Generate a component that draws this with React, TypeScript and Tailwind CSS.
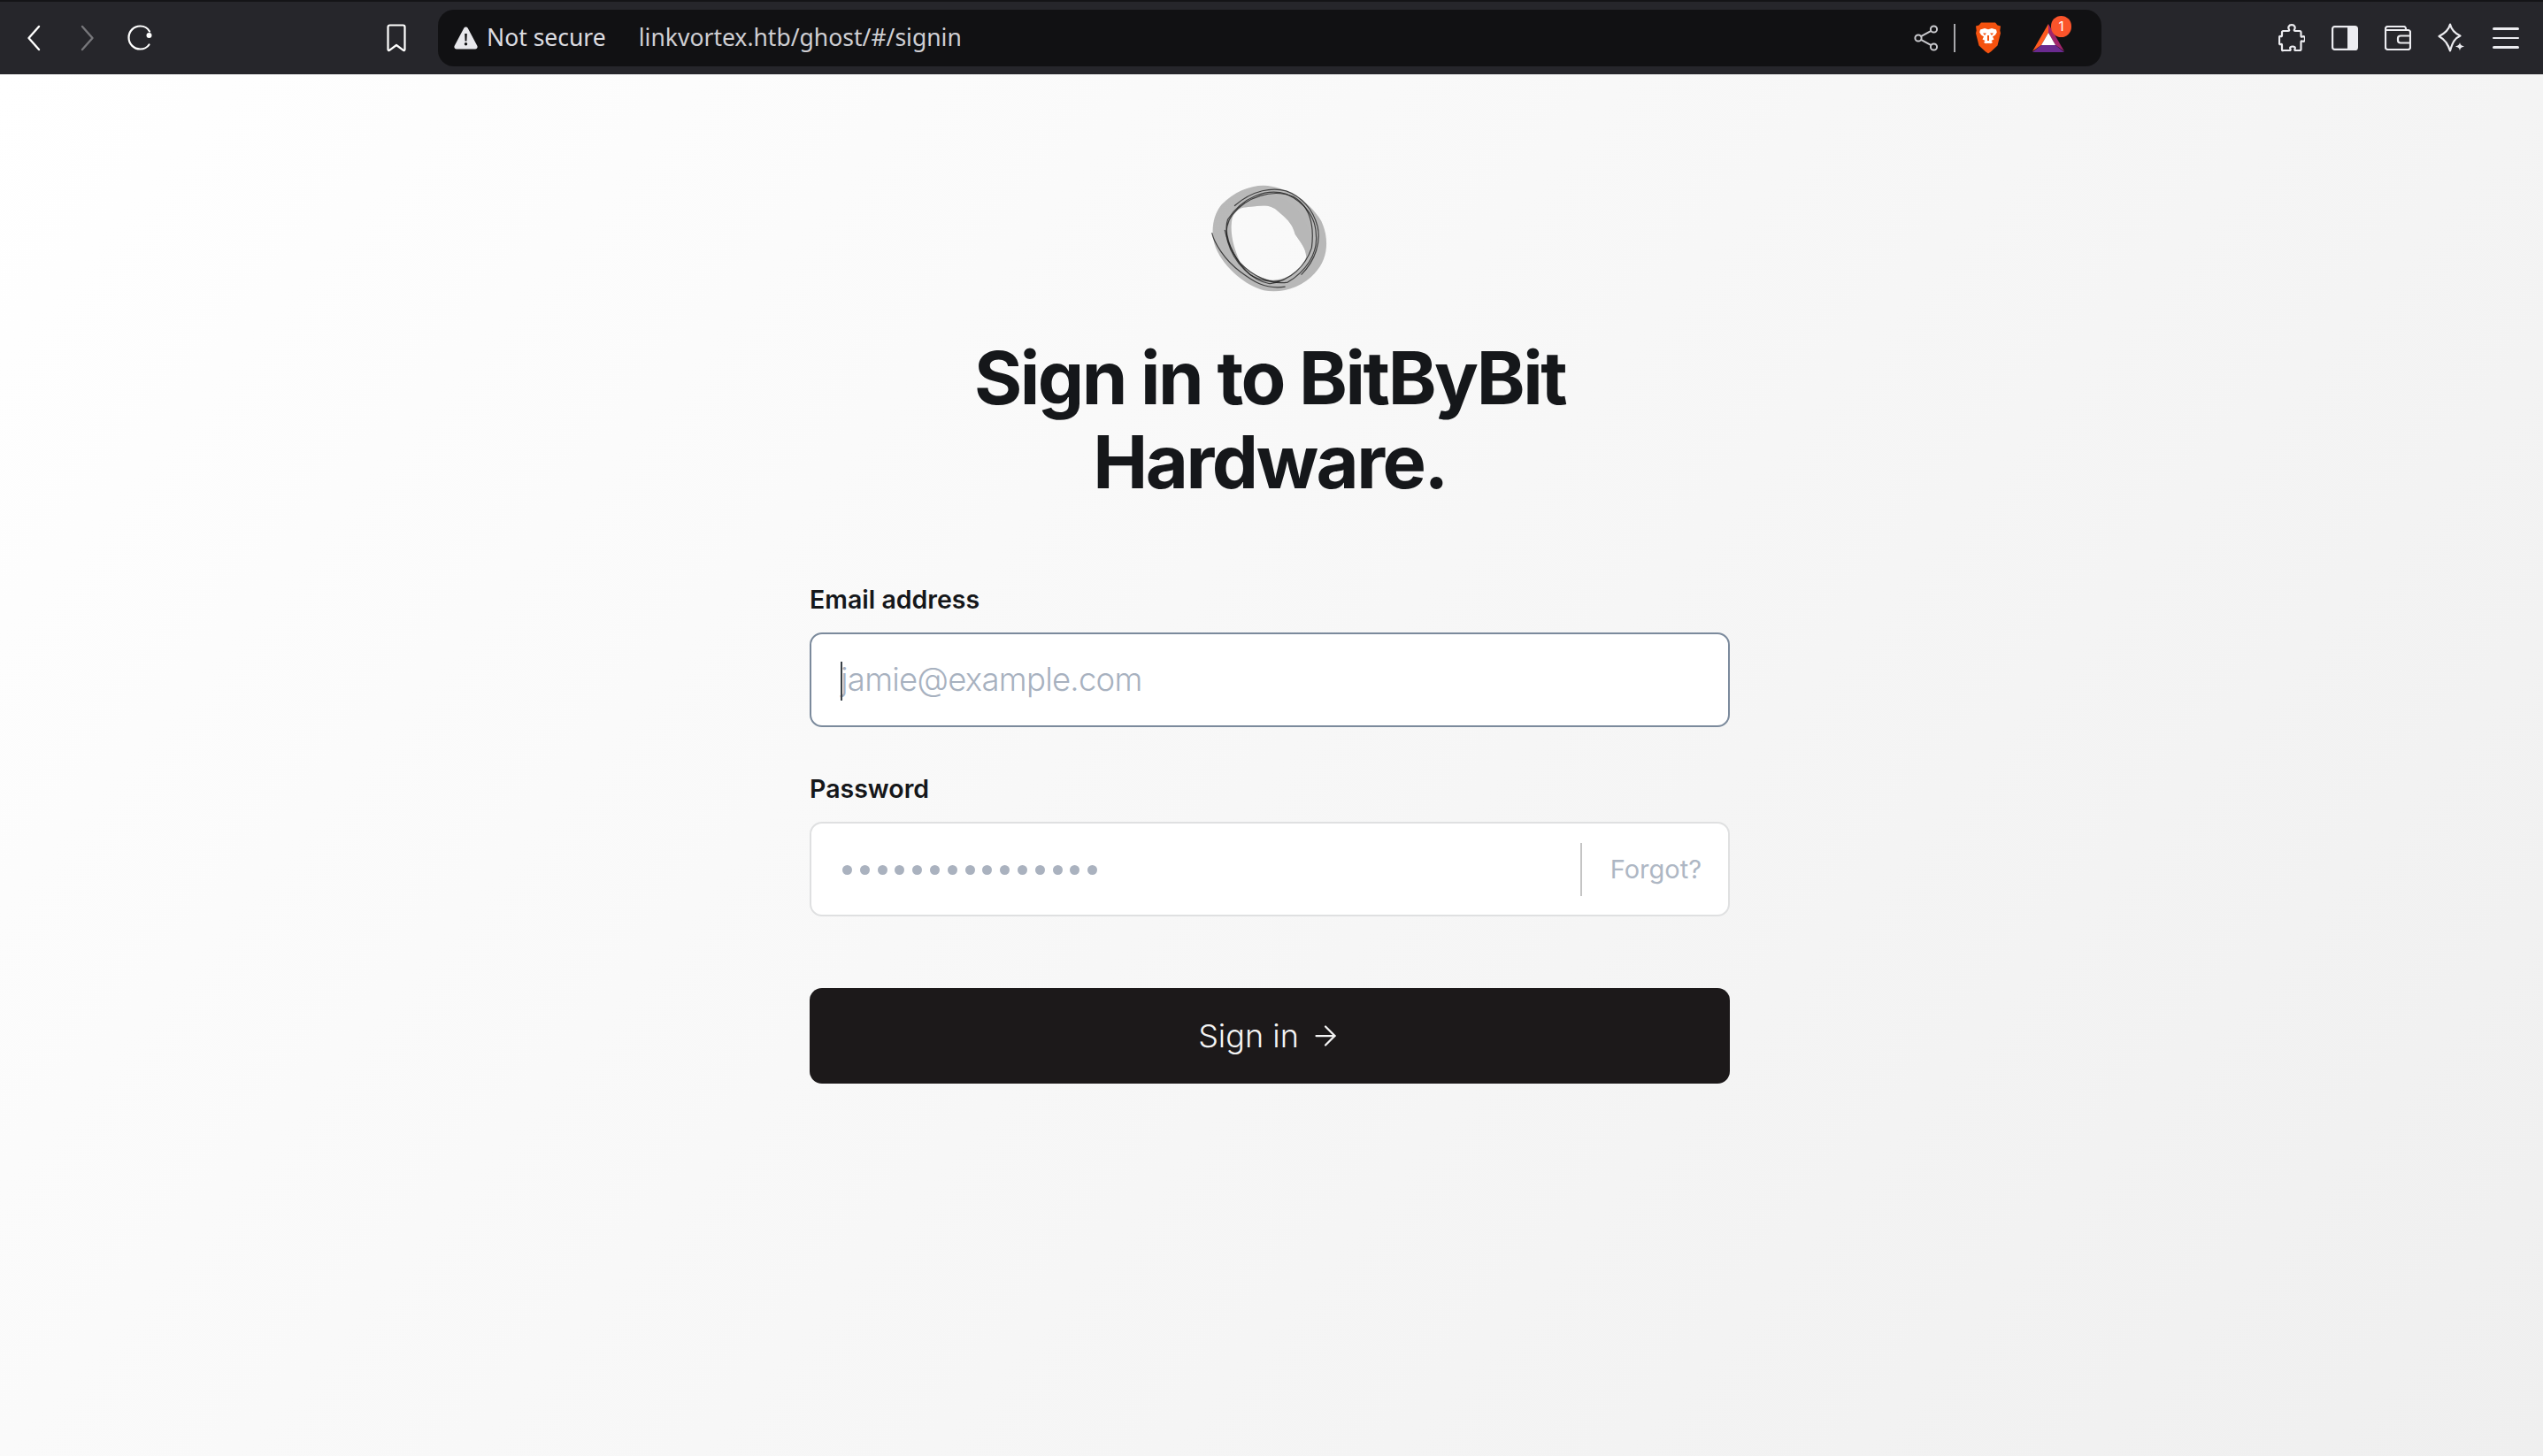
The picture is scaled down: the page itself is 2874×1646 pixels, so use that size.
import {ArrowRight} from "lucide-react";

const Back = () => (
    <svg width="24" height="32" viewBox="0 0 24 32" fill="none" stroke="currentColor" strokeWidth="2.4" strokeLinecap="round" strokeLinejoin="round">
        <path d="M15 3 3.500 16 15 29"/>
    </svg>
);

const Forward = () => (
    <svg width="24" height="32" viewBox="0 0 24 32" fill="none" stroke="currentColor" strokeWidth="2.4" strokeLinecap="round" strokeLinejoin="round">
        <path d="M4 3 15.500 16 4 29"/>
    </svg>
);

const Reload = () => (
    <svg width="32" height="32" viewBox="0 0 32 32" fill="none" stroke="currentColor" strokeWidth="2.2" strokeLinecap="round">
        <path d="M26 8.500C23.800 4.500 20 2.500 15.500 2.500 8 2.500 2.500 8.500 2.500 15.500s5.500 13 13 13c4.500 0 8-2 10-5"/>
        <circle cx="25.500" cy="13" r="3" fill="currentColor" stroke="none"/>
    </svg>
);

const Bookmark = () => (
    <svg width="24" height="32" viewBox="0 0 24 32" fill="none" stroke="currentColor" strokeWidth="2.2" strokeLinejoin="round" strokeLinecap="round">
        <path d="M3.500 1.500h15a2 2 0 0 1 2 2V29a1 1 0 0 1-1.600.8L11 24l-7.900 5.800A1 1 0 0 1 1.500 29V3.500a2 2 0 0 1 2-2Z"/>
    </svg>
);

const Warning = () => (
    <svg width="27" height="26" viewBox="0 0 27 26" className="shrink-0">
        <path fill="#e8e8ec" fillRule="evenodd" d="M11.300 1.800a2.500 2.500 0 0 1 4.400 0l10.600 20c.9 1.700-.3 3.700-2.200 3.700H2.900c-1.900 0-3.100-2-2.200-3.700ZM12.200 8l.4 8.500h1.800l.4-8.500ZM13.500 18a1.700 1.700 0 1 0 0 3.400 1.700 1.700 0 0 0 0-3.400Z"/>
    </svg>
);

const Share = () => (
    <svg width="28" height="30" viewBox="0 0 28 30" fill="none" stroke="#c9c9cd" strokeWidth="2">
        <circle cx="5" cy="15" r="3.600"/>
        <circle cx="22.500" cy="5" r="3.600"/>
        <circle cx="22.500" cy="25" r="3.600"/>
        <path d="M8 13.200 19.500 6.800M8 16.800 19.500 23.200"/>
    </svg>
);

const BraveLion = () => (
    <svg width="30" height="36" viewBox="0 0 30 36">
        <path fill="#f4520f" d="M7 .5h16l2.500 3 3.500 1-.7 5 .7 3-3.500 14-7 6.500-3.500 2.500-3.500-2.500-7-6.500L1 12.500l.7-3L1 4.500l3.500-1Z"/>
        <path fill="#fff" d="M6 8.500 11 7l4 1.300L19 7l5 1.500.8 3-1.800 3-3 2 1.500 3-3 1.500 1.500 2-5 3-5-3 1.500-2-3-1.500 1.500-3-3-2-1.800-3Z"/>
        <path fill="#f4520f" d="M9 12.500h4l-2 2.500ZM17 12.500h4l-2 2.500ZM14 15h2v6h-2ZM11.500 24h7L15 26.500Z"/>
    </svg>
);

const BatTriangle = () => (
    <svg width="36" height="32" viewBox="0 0 36 32">
        <path fill="#ff5a1f" d="M18 0 0 31l10-7 8-14Z"/>
        <path fill="#a1246b" d="M18 0v10l8 14 10 7Z"/>
        <path fill="#6a2a8f" d="M0 32h36l-10-8H10Z"/>
        <path fill="#fff" d="M18 10 10 24h16Z"/>
    </svg>
);

const Puzzle = () => (
    <svg width="30" height="32" viewBox="0 0 30 32" fill="none" stroke="#ececf0" strokeWidth="2.2" strokeLinejoin="round">
        <path d="M12 6.500C10.500 4 11.500 1.200 15 1.200s4.500 2.800 3 5.300c-.5 1 0 1.500 1 1.500h5c1 0 1.500.5 1.500 1.500v4c0 1 .6 1.500 1.500 1 2-1 3 .5 3 2.500s-1 3.500-3 2.500c-.9-.5-1.500 0-1.500 1v8c0 1-.5 1.500-1.500 1.500h-4.500c-1 0-1.500-.6-1-1.500 1-2-.5-3-2.500-3s-3.500 1-2.500 3c.5.9 0 1.500-1 1.500H5.500C4.500 30.500 4 30 4 29v-5c0-1-.6-1.500-1.500-1-1 .5-1.500-.2-1.500-1.200v-6.600c0-1 .5-1.700 1.500-1.200.9.500 1.500 0 1.500-1V9.500C4 8.500 4.500 8 5.500 8H11c1 0 1.500-.5 1-1.500Z"/>
    </svg>
);

const Sidebar = () => (
    <svg width="30" height="28" viewBox="0 0 30 28">
        <rect x="1.100" y="1.100" width="27.800" height="25.800" rx="2.500" fill="none" stroke="#ececf0" strokeWidth="2.2"/>
        <path fill="#ececf0" d="M18 1h8.500A2.500 2.500 0 0 1 29 3.500v21a2.500 2.500 0 0 1-2.500 2.500H18Z"/>
    </svg>
);

const Wallet = () => (
    <svg width="30" height="28" viewBox="0 0 30 28" fill="none" stroke="#ececf0" strokeWidth="2.2" strokeLinejoin="round">
        <path d="M24 5V3.500A2.500 2.500 0 0 0 21.500 1H3.500A2.500 2.500 0 0 0 1 3.500v21A2.500 2.500 0 0 0 3.500 27h23a2.500 2.500 0 0 0 2.500-2.500v-17A2.500 2.500 0 0 0 26.500 5H2"/>
        <path d="M29 11.500H18a3 3 0 0 0-3 3v2a3 3 0 0 0 3 3h11"/>
    </svg>
);

const Leo = () => (
    <svg width="32" height="34" viewBox="0 0 32 34">
        <path fill="none" stroke="#ececf0" strokeWidth="2.2" strokeLinejoin="round" d="M14 1.500c1.500 6 5 10 11.500 13-5.500 2.500-8.500 6-11.500 17-1-3-2-6-4.500-9.500C7.500 19 5 17 1.500 15 7.500 12 12.500 8 14 1.500Z"/>
        <path fill="#ececf0" d="M25 22c.5 2.500 1.500 3.500 5 4.500-3.500 1-4.500 2-5 5-.5-3-1.500-4-5-5 3.500-1 4.500-2 5-4.500Z"/>
    </svg>
);

const Menu = () => (
    <div className="flex flex-col gap-[8px] w-[30px]">
        <div className="h-[2.5px] bg-[#ececf0] rounded-full"/>
        <div className="h-[2.5px] bg-[#ececf0] rounded-full"/>
        <div className="h-[2.5px] bg-[#ececf0] rounded-full"/>
    </div>
);

// coordinates follow the 3x crop of the logo, hence the odd viewBox
const GhostLogo = () => (
    <svg width="132" height="124" viewBox="95 60 390 366" fill="none">
        <path fill="#777777" fillOpacity="0.5" fillRule="evenodd"
              d="M270 62C340 65 420 110 462 180c28 60 23 130-22 175-40 45-110 70-170 57C210 395 140 340 110 270 90 220 100 160 130 125 170 85 220 62 270 62ZM205 135C260 130 290 120 320 150c30 25 45 40 55 75 20 30 35 45 37 75-12 40-52 75-112 78-50-3-85-33-110-63-20-45-35-95-25-145 10-25 25-32 40-35Z"/>
        <path fill="#b5b5b5" fillOpacity="0.6" d="M205 135C260 130 290 120 320 150c30 25 45 40 55 75 20 30 35 45 37 75 8-30 20-70 0-110-25-50-60-85-110-90-40-5-80 5-97 35Z"/>
        <g stroke="#1f1f1f" strokeWidth="3.5" strokeOpacity="0.8">
            <path d="M150 175C200 100 280 70 345 90c65 30 100 80 100 140 5 60-35 120-95 155-60 10-120-25-160-65-30-40-55-100-40-145Z"/>
            <path d="M165 160C210 100 300 70 370 100c50 30 70 90 60 170-20 60-70 110-140 120-60-10-120-70-140-140-10-40 0-70 15-90Z"/>
            <path d="M172 130C235 75 300 68 345 80c50 18 90 60 105 120 10 50-5 110-55 160"/>
            <path d="M97 220c6 30 40 90 95 130 40 30 80 60 150 50"/>
            <path d="M140 210c10 50 40 110 85 150 30 20 70 25 100 20"/>
        </g>
    </svg>
);

const Dots = () => (
    <div className="flex gap-[8.8px] mt-[2px]">
        {Array.from({length: 15}).map((_, i) => (
            <div key={i} className="w-[11px] h-[11px] rounded-full bg-[#aab2bf]"/>
        ))}
    </div>
);

export default function App() {
    return (
        <div className="w-[2874px] h-[1646px] flex flex-col overflow-hidden font-['Inter',sans-serif]">
            <header className="h-[84px] shrink-0 bg-[#26262b] border-t-[2px] border-[#141417] flex items-center">
                <div className="flex items-center text-white ml-[29px] w-[150px]">
                    <Back/>
                    <span className="ml-[36px] text-[#77777b]"><Forward/></span>
                    <span className="ml-[30px]"><Reload/></span>
                </div>
                <span className="text-white ml-[258px]"><Bookmark/></span>
                <div className="ml-[34px] w-[1880px] h-[64px] rounded-[18px] bg-[#111113] flex items-center pl-[18px] pr-[26px] font-['Noto_Sans',sans-serif] text-[26.5px]">
                    <Warning/>
                    <span className="ml-[10px] text-[#dcdce0]">Not secure</span>
                    <span className="ml-[37px] text-[#cfcfd3] flex-1">linkvortex.htb/ghost/#/signin</span>
                    <Share/>
                    <div className="w-[2px] h-[32px] bg-[#a8a8ac] ml-[17px] mr-[22px]"/>
                    <BraveLion/>
                    <div className="ml-[35px] mr-[16px] relative">
                        <BatTriangle/>
                        <div className="absolute -top-[9px] left-[21px] w-[23px] h-[24px] rounded-full bg-[#fb542b] text-white text-[15px] leading-[24px] text-center font-['Inter']">1</div>
                    </div>
                </div>
                <div className="flex items-center gap-[30px] ml-[200px]">
                    <Puzzle/>
                    <Sidebar/>
                    <Wallet/>
                    <Leo/>
                    <Menu/>
                </div>
            </header>

            <main className="flex-1 bg-linear-[130deg] from-[#ffffff] to-[#efefef] flex flex-col items-center pr-[4px]">
                <div className="mt-[125px]"><GhostLogo/></div>
                <h1 className="mt-[47px] w-[760px] text-center text-[83px] leading-[95px] font-bold tracking-[-0.03em] text-[#15171a]">
                    Sign in to BitByBit Hardware.
                </h1>
                <form className="w-[1040px] mt-[90px] flex flex-col">
                    <label className="text-[28.5px] leading-[36px] font-semibold text-[#15171a]">Email address</label>
                    <div className="mt-[19px] h-[107px] rounded-[14px] bg-white border-[2px] border-[#7b8a9c] flex items-center pl-[33px] relative">
                        <div className="absolute left-[33px] top-[31px] w-[2px] h-[44px] bg-[#394047]"/>
                        <span className="text-[36.5px] text-[#a7b1bf] font-light tracking-[-0.02em]">jamie@example.com</span>
                    </div>
                    <label className="mt-[52px] text-[28.5px] leading-[36px] font-semibold text-[#15171a]">Password</label>
                    <div className="mt-[19px] h-[107px] rounded-[14px] bg-white border-[2px] border-[#dfe0e1] flex items-center pl-[35px] pr-[30px]">
                        <Dots/>
                        <div className="ml-auto w-[2px] h-[60px] bg-[#c4c4c4]"/>
                        <span className="ml-[32px] text-[29px] text-[#aeb7c4]">Forgot?</span>
                    </div>
                    <button type="button" className="mt-[81px] h-[108px] rounded-[14px] bg-[#1c191a] text-[#f4f4f4] text-[36px] font-light flex items-center justify-center gap-[12px]">
                        Sign in <ArrowRight size={36} strokeWidth={1.5}/>
                    </button>
                </form>
            </main>
        </div>
    );
}
